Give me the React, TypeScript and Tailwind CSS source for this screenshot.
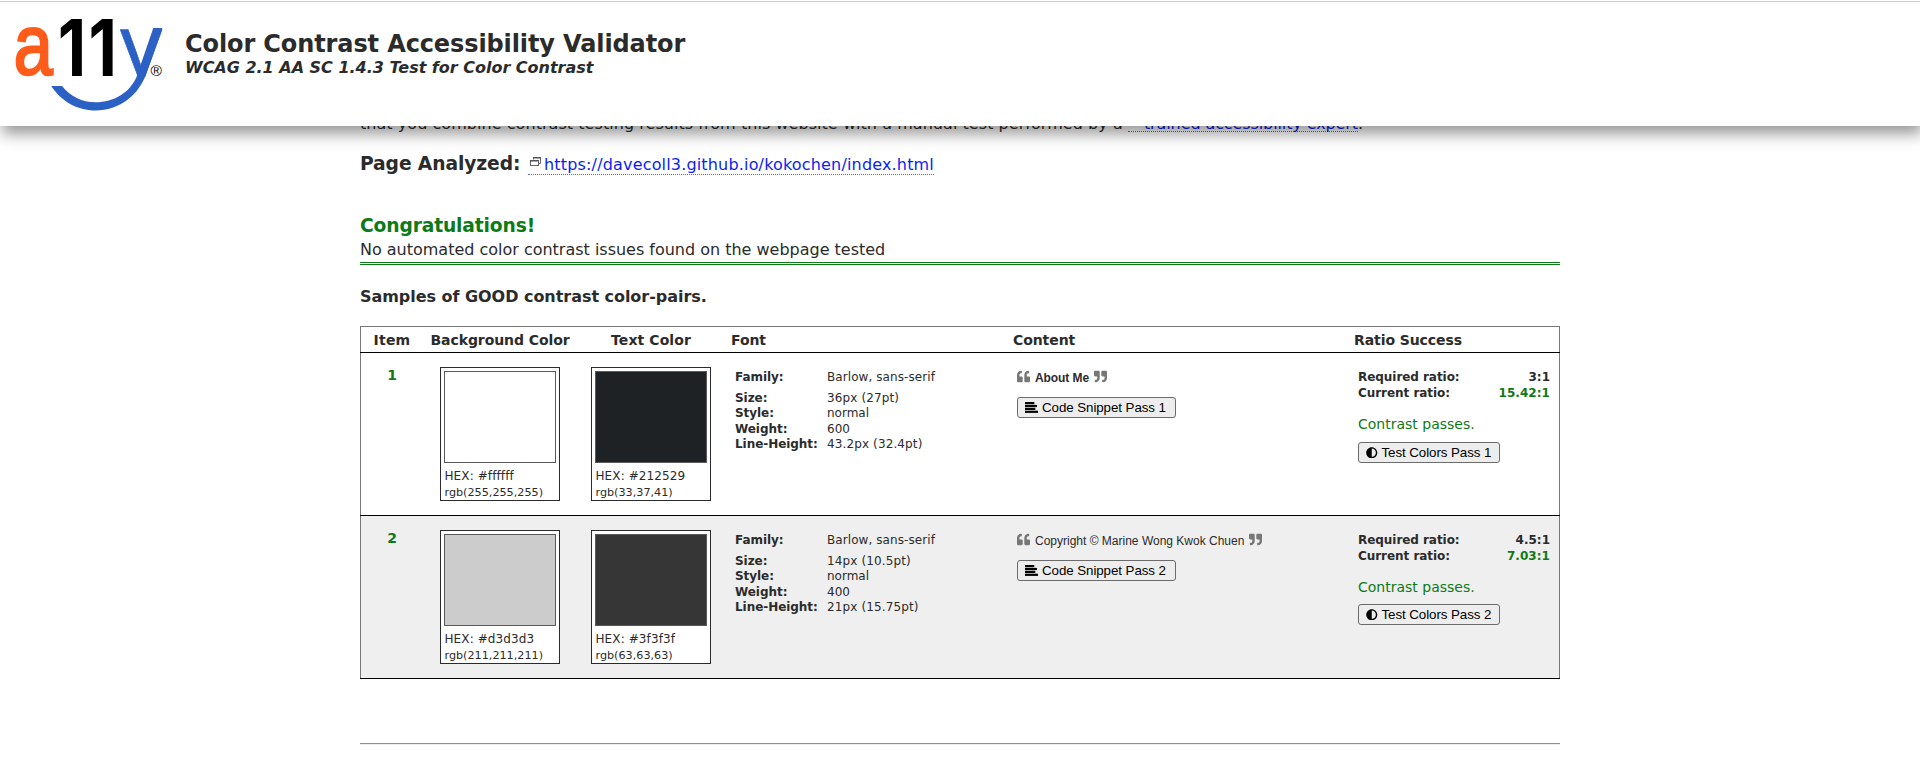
import type { ReactNode } from "react";
import { FaAdjust, FaQuoteLeft, FaQuoteRight } from "react-icons/fa";

type Sample = {
  item: number;
  bg: { hex: string; rgb: string; fill: string };
  fg: { hex: string; rgb: string; fill: string };
  size: string;
  weight: string;
  lineHeight: string;
  content: ReactNode;
  required: string;
  current: string;
  stripe: string;
  buttonGap: string;
};

const samples: Sample[] = [
  {
    item: 1,
    bg: { hex: "#ffffff", rgb: "rgb(255,255,255)", fill: "bg-white" },
    fg: { hex: "#212529", rgb: "rgb(33,37,41)", fill: "bg-[#1e2225]" },
    size: "36px (27pt)",
    weight: "600",
    lineHeight: "43.2px (32.4pt)",
    content: <span className="font-bold tracking-[-0.08px]">About Me</span>,
    required: "3:1",
    current: "15.42:1",
    stripe: "bg-white",
    buttonGap: "mt-[10px]",
  },
  {
    item: 2,
    bg: { hex: "#d3d3d3", rgb: "rgb(211,211,211)", fill: "bg-[#cccccc]" },
    fg: { hex: "#3f3f3f", rgb: "rgb(63,63,63)", fill: "bg-[#363636]" },
    size: "14px (10.5pt)",
    weight: "400",
    lineHeight: "21px (15.75pt)",
    content: <span>Copyright © Marine Wong Kwok Chuen</span>,
    required: "4.5:1",
    current: "7.03:1",
    stripe: "bg-[#efefef]",
    buttonGap: "mt-[9px]",
  },
];

function Logo() {
  return (
    <svg width="170" height="112" viewBox="0 0 170 112" className="block overflow-visible" role="img" aria-label="a11y">
      <defs>
        <clipPath id="y-top">
          <rect x="0" y="-70" width="60" height="71.500" />
        </clipPath>
      </defs>
      <text
        transform="translate(13.8 74.4) scale(0.815 1)"
        fontFamily="Liberation Sans"
        fontSize="86"
        fill="#ff5c1c"
        stroke="#ff5c1c"
        strokeWidth="2.6"
      >
        a
      </text>
      <g fontFamily="Inter" fontWeight="700" fontSize="78.5" fill="#000">
        <text transform="translate(57.8 75.5) scale(0.84 1)">1</text>
        <text transform="translate(88.4 75.5) scale(0.84 1)">1</text>
      </g>
      <text
        transform="translate(120 75.5) scale(0.95 1)"
        fontFamily="Liberation Sans"
        fontSize="89"
        fill="#2b61c4"
        stroke="#2b61c4"
        strokeWidth="0.6"
        clipPath="url(#y-top)"
      >
        y
      </text>
      <path
        d="M153.3 28H162.3L146.500 73C139 95.500 119 110.500 95.600 110.500C77 110.500 61 101 51.200 86H62C70.500 96.500 82 102.300 95.600 102.300C114 102.300 129.500 92.500 136.300 77.500Z"
        fill="#2b61c4"
      />
      <text x="150.6" y="75.5" fontFamily="Liberation Sans" fontSize="15.5" fill="#000">
        ®
      </text>
    </svg>
  );
}

function WindowIcon() {
  return (
    <svg width="12" height="10" viewBox="0 0 12 10" className="mr-[2px] ml-[2px] inline-block align-[3px]">
      <path d="M3.500 2.500V0.500H10.500V6.500H8.500" fill="none" stroke="#666" />
      <rect x="3" y="0" width="8" height="1.500" fill="#555" />
      <rect x="0.500" y="3.500" width="8" height="5" fill="#fff" stroke="#666" />
      <rect x="0" y="3" width="9" height="1.500" fill="#555" />
    </svg>
  );
}

function AlignIcon() {
  return (
    <svg width="13" height="11" viewBox="0 0 13 11" className="mr-[4px]">
      <rect x="0" y="0" width="9.300" height="2.200" />
      <rect x="0" y="2.900" width="12" height="2.200" />
      <rect x="0" y="5.800" width="10.300" height="2.200" />
      <rect x="0" y="8.700" width="13" height="2.200" />
    </svg>
  );
}

function Button({ width, children }: { width: string; children: ReactNode }) {
  return (
    <button
      className={`flex h-[21px] items-center rounded-[3px] border border-[#6b6b6b] bg-[#ededed] pl-[7px] font-['Liberation_Sans',sans-serif] text-[13.333px] leading-[15px] tracking-[-0.07px] whitespace-nowrap text-black ${width}`}
    >
      {children}
    </button>
  );
}

function Swatch({ fill, hex, rgb }: { fill: string; hex: string; rgb: string }) {
  return (
    <div className="mx-auto mt-[14px] h-[134px] w-[120px] border border-[#2b2b2b] bg-white px-[3px] pt-[3px]">
      <div className={`h-[92px] border border-[#5a5a5a] ${fill}`} />
      <div className="mt-[6px] pl-[0.500px] text-[12px] leading-[14px] tracking-[0.1px]">HEX: {hex}</div>
      <div className="mt-[3px] pl-[0.500px] text-[11.200px] leading-[13px]">{rgb}</div>
    </div>
  );
}

const columns = "grid grid-cols-[62px_154px_148px_282px_341px_211px]";

export default function App() {
  return (
    <div className="h-[761px] overflow-hidden bg-white font-['DejaVu_Sans',Verdana,sans-serif] text-[16px] text-[#2b2b2b]">
      <header className="relative z-10 h-[126px] bg-white pt-px shadow-[2px_8px_14px_rgba(0,0,0,0.4)]">
        <div className="flex border-t border-[#cccccc]">
          <div className="-mt-[2px] w-[185px]">
            <Logo />
          </div>
          <div className="pt-[29px] whitespace-nowrap">
            <h1 className="text-[24px] leading-[26px] font-bold tracking-[-0.11px]">Color Contrast Accessibility Validator</h1>
            <p className="leading-[21px] font-bold tracking-[-0.01px] italic">WCAG 2.1 AA SC 1.4.3 Test for Color Contrast</p>
          </div>
        </div>
      </header>

      <main className="mx-auto w-[1200px] whitespace-nowrap">
        <p className="-mt-[12px] h-[20px] leading-[20px] tracking-[0.05px]">
          that you combine contrast testing results from this website with a manual test performed by a{" "}
          <a className="inline-block border-b border-dotted border-[#4a6ee0] leading-[15px] tracking-[-0.1px] text-[#0a1ee8]">
            <WindowIcon />
            trained accessibility expert
          </a>
          .
        </p>

        <div className="mt-[18px] flex h-[24px] items-baseline leading-[24px]">
          <h2 className="w-[168px] text-[18.700px] font-bold tracking-[-0.1px]">Page Analyzed:</h2>
          <a className="inline-block border-b border-dotted border-[#4a6ee0] leading-[19px] tracking-[0.17px] text-[#0a1ef5]">
            <WindowIcon />
            https://davecoll3.github.io/kokochen/index.html
          </a>
        </div>

        <section className="mt-[38px] border-b-[3px] border-double border-[#0e7a16] pb-[2px]">
          <h2 className="text-[18.700px] leading-[24px] font-bold tracking-[-0.15px] text-[#0e7a16]">Congratulations!</h2>
          <p className="mt-px leading-[21px] tracking-[-0.01px]">No automated color contrast issues found on the webpage tested</p>
        </section>

        <h3 className="mt-[21px] leading-[21px] font-bold tracking-[-0.04px]">Samples of GOOD contrast color-pairs.</h3>

        <section className="mt-[19px] border-x border-t border-[#777]">
          <div className={`${columns} -mx-px h-[26px] border-b border-black px-px pt-px text-[14px] leading-[24px] font-bold tracking-[-0.08px]`}>
            <div className="text-center tracking-[0.2px]">Item</div>
            <div className="text-center">Background Color</div>
            <div className="text-center tracking-[0.1px]">Text Color</div>
            <div className="pl-[6px]">Font</div>
            <div className="pl-[6px]">Content</div>
            <div className="pl-[6px]">Ratio Success</div>
          </div>

          {samples.map((s) => (
            <div key={s.item} className="-mx-px border-b border-black">
              <div className={`${columns} h-[162px] border-x border-[#777] ${s.stripe}`}>
                <div className="pt-[14px] text-center text-[14px] leading-[16px] font-bold text-[#0e7a16]">{s.item}</div>
                <Swatch {...s.bg} />
                <Swatch {...s.fg} />
                <dl className="grid grid-cols-[92px_1fr] grid-rows-[21px_15px_16px_15px_15px] content-start pt-[17px] pl-[10px] text-[12px] leading-[14px]">
                  <dt className="font-bold tracking-[-0.05px]">Family:</dt>
                  <dd className="tracking-[0.08px]">Barlow, sans-serif</dd>
                  <dt className="font-bold tracking-[-0.05px]">Size:</dt>
                  <dd className="tracking-[0.12px]">{s.size}</dd>
                  <dt className="font-bold tracking-[-0.05px]">Style:</dt>
                  <dd>normal</dd>
                  <dt className="font-bold tracking-[-0.05px]">Weight:</dt>
                  <dd>{s.weight}</dd>
                  <dt className="font-bold tracking-[-0.05px]">Line-Height:</dt>
                  <dd className="tracking-[0.12px]">{s.lineHeight}</dd>
                </dl>
                <div className="pt-[18px] pl-[10px]">
                  <div className="flex h-[14px] gap-[5px] font-['Liberation_Sans',sans-serif] text-[12px] leading-[14px]">
                    <FaQuoteLeft className="-mt-px h-[13px] w-[13px] text-[#777]" />
                    {s.content}
                    <FaQuoteRight className="-mt-px h-[13px] w-[13px] text-[#777]" />
                  </div>
                  <div className="mt-[12px]">
                    <Button width="w-[159px]">
                      <AlignIcon />
                      Code Snippet Pass {s.item}
                    </Button>
                  </div>
                </div>
                <div className="pt-[17px] pr-[9px] pl-[10px]">
                  <div className="flex h-[16px] justify-between text-[12px] leading-[14px] font-bold">
                    <span className="tracking-[-0.05px]">Required ratio:</span>
                    <span>{s.required}</span>
                  </div>
                  <div className="flex h-[16px] justify-between text-[12px] leading-[14px] font-bold">
                    <span className="tracking-[-0.05px]">Current ratio:</span>
                    <span className="tracking-[0.05px] text-[#0e7a16]">{s.current}</span>
                  </div>
                  <p className="mt-[14px] text-[14px] leading-[16px] text-[#0e7a16]">Contrast passes.</p>
                  <div className={s.buttonGap}>
                    <Button width="w-[142px]">
                      <FaAdjust className="mr-[4px] h-[11.500px] w-[11.500px]" />
                      Test Colors Pass {s.item}
                    </Button>
                  </div>
                </div>
              </div>
            </div>
          ))}
        </section>

        <hr className="mt-[64px] h-[2px] border-t border-b border-t-[#909090] border-b-[#eeeeee]" />
      </main>
    </div>
  );
}
